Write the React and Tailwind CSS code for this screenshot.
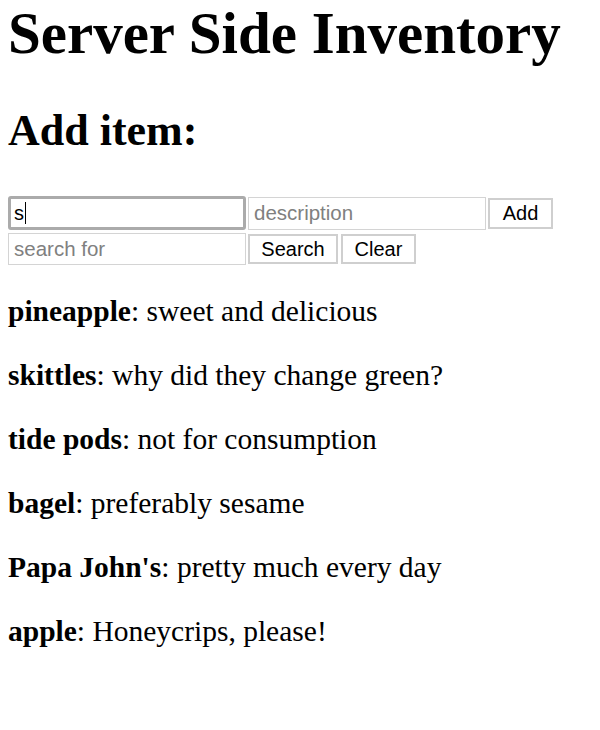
import React from "react";

const items = [
  ["pineapple", "sweet and delicious"],
  ["skittles", "why did they change green?"],
  ["tide pods", "not for consumption"],
  ["bagel", "preferably sesame"],
  ["Papa John's", "pretty much every day"],
  ["apple", "Honeycrips, please!"],
];

export default function App() {
  return (
    <div className="min-h-[730px] bg-white px-2 text-black font-['Liberation_Serif',serif]">
      <h1 className="m-0 text-[59px] font-bold leading-[67px]">Server Side Inventory</h1>
      <h2 className="mt-[38px] mb-0 text-[44px] font-bold leading-[51px]">Add item:</h2>
      <div className="mt-[40px] flex flex-col gap-[3px] font-['Liberation_Sans',sans-serif] text-[20px]">
        <div className="flex items-center gap-[2px]">
          <div className="flex h-[34px] w-[238px] items-center rounded-[3px] border-[3px] border-[#ababab] bg-white pl-[3px]">
            <span className="leading-none">s</span>
            <span className="ml-[1px] inline-block h-[22px] w-[1px] bg-black"></span>
          </div>
          <input
            className="h-[33px] w-[238px] border border-[#d4d4d4] bg-white px-[5px] text-[20.5px] outline-none placeholder:text-[#808080]"
            placeholder="description"
            readOnly
          />
          <button className="h-[31px] w-[65px] border-2 border-[#cfcfcf] bg-white text-[20px] leading-none">Add</button>
        </div>
        <div className="flex items-center">
          <input
            className="h-[32px] w-[238px] border border-[#d4d4d4] bg-white px-[5px] text-[20.5px] outline-none placeholder:text-[#808080]"
            placeholder="search for"
            readOnly
          />
          <button className="ml-[2px] h-[30px] w-[90px] border-2 border-[#cfcfcf] bg-white text-[20px] leading-none">Search</button>
          <button className="ml-[3px] h-[30px] w-[75px] border-2 border-[#cfcfcf] bg-white text-[20px] leading-none">Clear</button>
        </div>
      </div>
      <div className="mt-[29px] flex flex-col gap-[30px] text-[29.5px] leading-[34px]">
        {items.map(([name, desc]) => (
          <p key={name} className="m-0">
            <b className="font-bold">{name}</b>: {desc}
          </p>
        ))}
      </div>
    </div>
  );
}
